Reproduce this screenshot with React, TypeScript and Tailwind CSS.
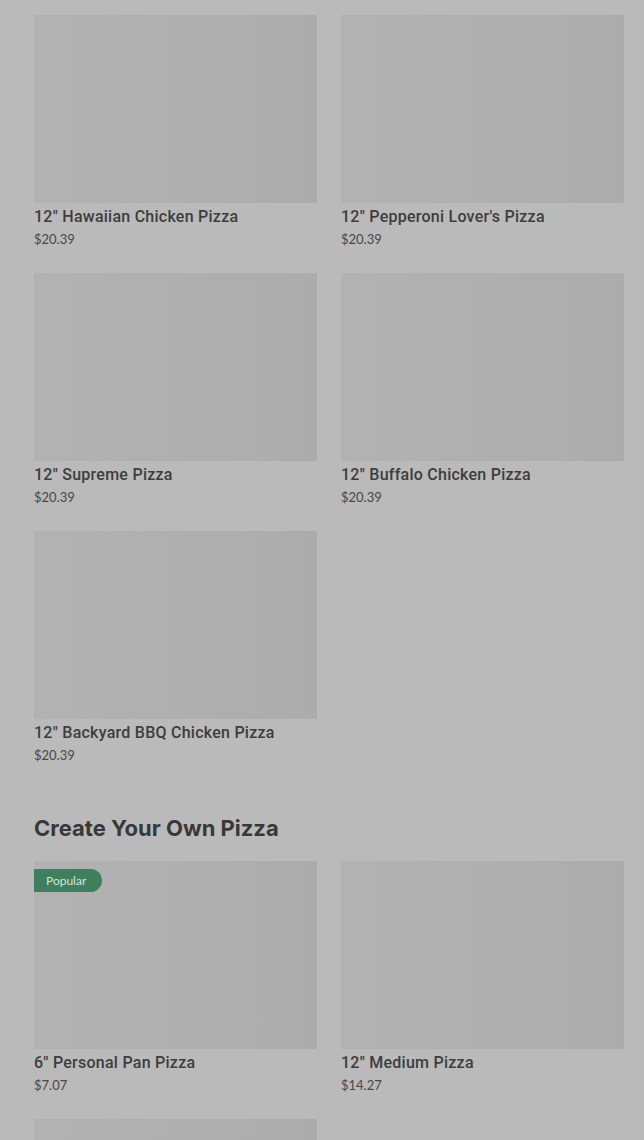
type Pizza = {
	name: string;
	price: string;
	popular?: boolean;
};

const specialty: Pizza[] = [
	{ name: '12" Hawaiian Chicken Pizza', price: "$20.39" },
	{ name: '12" Pepperoni Lover\'s Pizza', price: "$20.39" },
	{ name: '12" Supreme Pizza', price: "$20.39" },
	{ name: '12" Buffalo Chicken Pizza', price: "$20.39" },
	{ name: '12" Backyard BBQ Chicken Pizza', price: "$20.39" },
];

const createOwn: Pizza[] = [
	{ name: '6" Personal Pan Pizza', price: "$7.07", popular: true },
	{ name: '12" Medium Pizza', price: "$14.27" },
	{ name: '14" Large Pizza', price: "$16.67" },
];

const PizzaCard: React.FC<Pizza> = ({ name, price, popular }) => {
	return (
		<div className="flex flex-col">
			<div className="relative h-[188px] w-full bg-gradient-to-r from-[#b2b2b2] to-[#acacac]">
				{popular && (
					<span className="absolute left-0 top-[8px] flex h-[23px] items-center rounded-r-full bg-[#3e7f5e] pl-[12px] pr-[16px] text-[12px] text-[#d6e4dc] font-['Lato',sans-serif]">
						Popular
					</span>
				)}
			</div>
			<h3 className="mt-[3px] text-[16px] leading-[22px] font-medium tracking-[0.25px] text-[#3d3d3d] font-['Roboto',sans-serif]">
				{name}
			</h3>
			<p className="mt-[1px] text-[13px] leading-[20px] text-[#484848] font-['Lato',sans-serif]">
				{price}
			</p>
		</div>
	);
};

export default function App() {
	return (
		<div className="h-[1140px] w-full overflow-hidden bg-[#bababa] pl-[34px] pr-[20px] pt-[15px]">
			<div className="grid grid-cols-2 gap-x-[24px] gap-y-[24px]">
				{specialty.map((p) => (
					<PizzaCard key={p.name} {...p} />
				))}
			</div>
			<h2 className="mt-[49px] mb-[19px] text-[22px] leading-[28px] font-bold text-[#383838] font-['Inter',sans-serif]">
				Create Your Own Pizza
			</h2>
			<div className="grid grid-cols-2 gap-x-[24px] gap-y-[24px]">
				{createOwn.map((p) => (
					<PizzaCard key={p.name} {...p} />
				))}
			</div>
		</div>
	);
}
